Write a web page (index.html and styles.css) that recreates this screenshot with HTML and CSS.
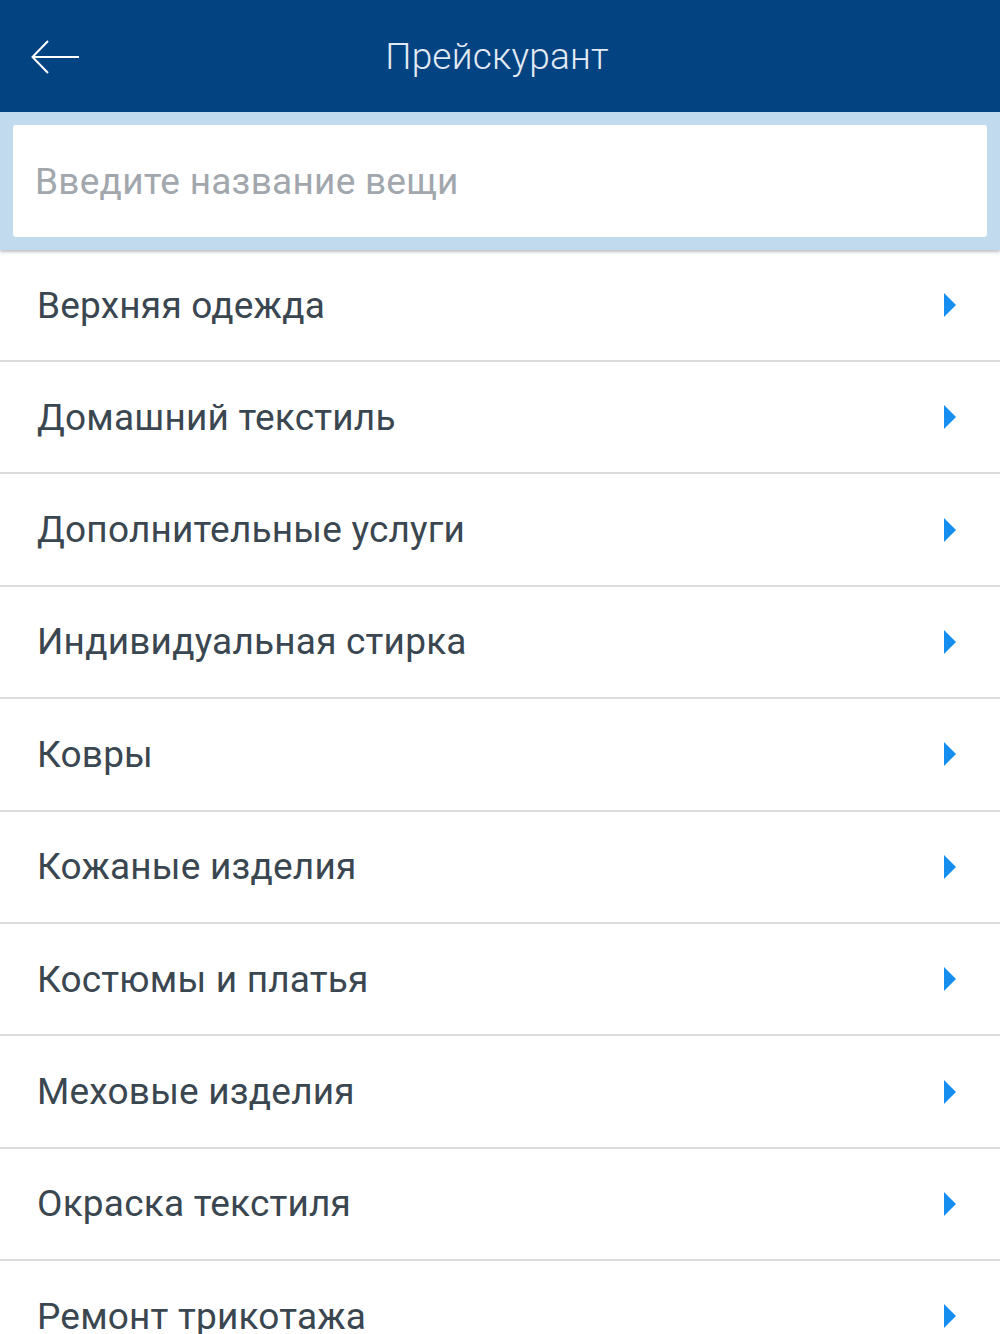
FILE: index.html
```html
<!DOCTYPE html>
<html lang="ru">
<head>
    <meta charset="UTF-8">
    <meta name="viewport" content="width=device-width, initial-scale=1.0">
    <title>Прейскурант</title>
    <link rel="stylesheet" href="styles.css">
</head>
<body>
    <header class="topbar">
        <button class="back" aria-label="Назад">
            <svg width="50" height="36" viewBox="0 0 50 36">
                <path d="M48 18H2M17 2L1.5 18L17 34" fill="none" stroke="#fff" stroke-width="2"/>
            </svg>
        </button>
        <h1>Прейскурант</h1>
    </header>

    <div class="search">
        <input type="text" placeholder="Введите название вещи">
    </div>

    <ul class="categories">
        <li><span>Верхняя одежда</span><i class="arrow"></i></li>
        <li><span>Домашний текстиль</span><i class="arrow"></i></li>
        <li><span>Дополнительные услуги</span><i class="arrow"></i></li>
        <li><span>Индивидуальная стирка</span><i class="arrow"></i></li>
        <li><span>Ковры</span><i class="arrow"></i></li>
        <li><span>Кожаные изделия</span><i class="arrow"></i></li>
        <li><span>Костюмы и платья</span><i class="arrow"></i></li>
        <li><span>Меховые изделия</span><i class="arrow"></i></li>
        <li><span>Окраска текстиля</span><i class="arrow"></i></li>
        <li><span>Ремонт трикотажа</span><i class="arrow"></i></li>
    </ul>
</body>
</html>
```

FILE: styles.css
```css
body {
    margin: 0;
    font-family: Roboto, "Noto Sans", sans-serif;
    background: #fff;
    overflow: hidden;
}
.topbar {
    height: 112px;
    background: #044382;
    display: flex;
    align-items: center;
    position: relative;
}
.back {
    background: none;
    border: none;
    padding: 0;
    margin-left: 31px;
    margin-top: 2px;
    display: flex;
}
.topbar h1 {
    position: absolute;
    left: 0;
    right: 0;
    margin: 0 0 0 -6px;
    text-align: center;
    font-weight: 300;
    font-size: 37px;
    letter-spacing: 0.2px;
    color: #e2eaf3;
    pointer-events: none;
}
.search {
    background: #c1daed;
    padding: 13px;
    box-shadow: 0 2px 3px rgba(0, 0, 0, 0.25);
    position: relative;
    z-index: 1;
}
.search input {
    display: block;
    box-sizing: border-box;
    width: 100%;
    height: 112px;
    border: none;
    border-radius: 3px;
    padding: 0 22px;
    font-family: inherit;
    font-size: 37px;
    letter-spacing: 0.25px;
    color: #3a4650;
    background: #fff;
    outline: none;
}
.search input::placeholder {
    color: #a1a7ad;
}
.categories {
    list-style: none;
    margin: 0;
    padding: 0;
}
.categories li {
    height: 110.4px;
    border-bottom: 2px solid #dcdcdc;
    display: flex;
    align-items: center;
    justify-content: space-between;
    padding: 0 44px 0 37px;
    font-size: 37px;
    letter-spacing: 0.2px;
    color: #3a4650;
}
.categories li:first-child {
    height: 110px;
}
.arrow {
    width: 0;
    height: 0;
    border-top: 12px solid transparent;
    border-bottom: 12px solid transparent;
    border-left: 12px solid #168ef0;
}
```
